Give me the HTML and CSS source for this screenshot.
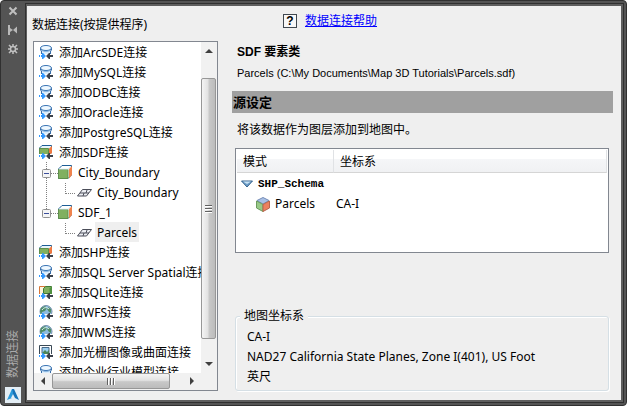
FILE: index.html
```html
<!doctype html>
<html lang="zh-CN">

	<head>
		<meta charset="UTF-8">
		<title>数据连接</title>
		<link rel="stylesheet" href="styles.css">
	</head>

	<body>
		<!-- 图标 -->
		<svg class="sprite" aria-hidden="true">
			<symbol id="arrows" viewBox="0 0 14 14">
				<path d="M0 9h14v5H0z" fill="#fff" />
				<path d="M0 10h1v2H0zM2 10h1V8h1l3 3-3 3H3v-2H2z" fill="#3399ff" />
				<path d="M14 10h-3V8h-1l-3 3 3 3h1v-2h3z" fill="#3c414b" />
			</symbol>
			<symbol id="db" viewBox="0 0 14 14">
				<path d="M1 3l1 5-1 2h12l-1-2 1-5z" fill="#dcedfb" />
				<path d="M1.500 3v2l1 1v3M12.500 3v2l-1 1v3" fill="none" stroke="#3a6ea8" />
				<path d="M3 5.500c2 1.500 6 1.500 8 0" fill="none" stroke="#8db8e0" />
				<ellipse cx="7" cy="3" rx="5.500" ry="2.500" fill="#eef8ff" stroke="#3a74b4" />
				<use href="#arrows" />
			</symbol>
			<symbol id="cube" viewBox="0 0 14 14">
				<path d="M.5 4L4 .5h9.500V10L10 13.500H.5z" fill="#fff" stroke="#1d5d96" />
				<path d="M11 4L14 1v9l-3 3.500z" fill="#f0834d" />
				<path d="M.5 4.500h9.500v9H.5z" fill="#81b060" stroke="#5f8f4c" />
				<path d="M1 4h9l3-3" fill="none" stroke="#dff0f5" />
			</symbol>
			<symbol id="sdf" viewBox="0 0 14 14">
				<path d="M.5 3L3 .5h9.500V8L10 10H.5z" fill="#e8f5fa" stroke="#1d5d96" />
				<path d="M10 3.500l3-2.500v7l-3 2z" fill="#ef7840" />
				<path d="M.5 3.500h9v6h-9z" fill="#81b060" stroke="#5f8f4c" />
				<use href="#arrows" />
			</symbol>
			<symbol id="sqlite" viewBox="0 0 14 14">
				<path d="M.5 1.500h6v9h-6z" fill="#fff6df" stroke="#d77738" />
				<path d="M4.500 3.500l2-2h6v7h-8z" fill="#81b060" stroke="#3f7c35" />
				<path d="M10.500 3l2.500-1v7h-2.500z" fill="#4f913f" />
				<use href="#arrows" />
			</symbol>
			<symbol id="globe" viewBox="0 0 14 14">
				<circle cx="7" cy="6.500" r="6" fill="#8dbce0" stroke="#7590aa" />
				<path d="M2 3l4-2 2 2-2 3-3 1-1 3-1-4zM9 2l3 2v4l-2-1-2-3z" fill="#508d67" />
				<path d="M3 5c2-3 5-3 7-1" fill="none" stroke="#e2f4ff" />
				<use href="#arrows" />
			</symbol>
			<symbol id="raster" viewBox="0 0 14 14">
				<path d="M.5.5h12v10H.5z" fill="#fff" stroke="#3b4a57" />
				<path d="M3 2.500h7v6H3z" fill="#9ccff0" stroke="#476989" />
				<path d="M3 8l3-3 2 2 2-2v4H3z" fill="#4c865a" />
				<use href="#arrows" />
			</symbol>
			<symbol id="plane" viewBox="0 0 14 14" overflow="visible">
				<path d="M.5 11L5.500 4.500h9L9.500 11z" fill="#eef0f5" stroke="#4a4d58" />
				<path d="M3 8h9M6 11l1-3M9 8l1-3" stroke="#4a4d58" />
			</symbol>
			<symbol id="minus" viewBox="0 0 9 9">
				<rect x=".5" y=".5" width="8" height="8" rx="1" fill="#f5f5f5" stroke="#919191" />
				<path d="M2 4.500h5" stroke="#3b4e9b" />
			</symbol>
			<symbol id="schema" viewBox="0 0 14 15">
				<path d="M7 .5l6 3-6 3.500-6-3.500z" fill="#a9c0e6" stroke="#738bb5" />
				<path d="M.5 4L7 7.500v7L.5 11z" fill="#98c987" stroke="#6c9a5e" />
				<path d="M13.500 4L7 7.500v7l6.500-3.500z" fill="#ed805f" stroke="#b8664e" />
			</symbol>
		</svg>

		<div class="palette">
			<div class="titlebar">
				<button type="button" class="tool" aria-label="关闭">
					<svg width="10" height="10"><path d="M1.500 1.500l7 7M8.500 1.500l-7 7" stroke="#c0c0c0" stroke-width="2" /></svg>
				</button>
				<button type="button" class="tool" aria-label="自动隐藏">
					<svg width="10" height="10"><path d="M1 0v10" stroke="#b8b8b8" stroke-width="2" /><path d="M2 3v4l3-2zM9 1.500v7L5 5z" fill="#b8b8b8" /></svg>
				</button>
				<button type="button" class="tool" aria-label="特性">
					<svg width="10" height="10"><circle cx="5" cy="5" r="2.500" fill="none" stroke="#c0c0c0" stroke-width="1.500" /><path d="M5 0v2.500M5 7.500V10M0 5h2.500M7.500 5H10M1 1l2 2M7 7l2 2M9 1L7 3M3 7L1 9" stroke="#c0c0c0" stroke-width="1.500" /></svg>
				</button>
				<span class="caption">数据连接</span>
				<svg class="logo" width="16" height="16">
					<rect width="16" height="16" fill="#e4eef5" />
					<path d="M7 2h2l5 11-4-2H6z" fill="#1673b8" />
					<path d="M7 2L2 13l5-2 1-5z" fill="#2b9bdc" />
					<path d="M8 7l2 4H6z" fill="#e4eef5" />
				</svg>
			</div>

			<div class="content">
				<div class="providers">
					<h2 class="label">数据连接(按提供程序)</h2>
					<div class="tree-box">
						<ul class="tree">
							<li class="node"><svg class="icon"><use href="#db" /></svg><span>添加ArcSDE连接</span></li>
							<li class="node"><svg class="icon"><use href="#db" /></svg><span>添加MySQL连接</span></li>
							<li class="node"><svg class="icon"><use href="#db" /></svg><span>添加ODBC连接</span></li>
							<li class="node"><svg class="icon"><use href="#db" /></svg><span>添加Oracle连接</span></li>
							<li class="node"><svg class="icon"><use href="#db" /></svg><span>添加PostgreSQL连接</span></li>
							<li class="node"><svg class="icon"><use href="#sdf" /></svg><span>添加SDF连接</span></li>
							<li class="node child">
								<svg class="guide"><path d="M12.500 0v20M17 11.500h7" /><use href="#minus" x="8" y="7" width="9" height="9" /></svg>
								<svg class="icon"><use href="#cube" /></svg><span>City_Boundary</span>
							</li>
							<li class="node child">
								<svg class="guide"><path d="M12.500 0v20" /></svg>
								<svg class="guide leaf"><path d="M7.500 1v11M8 11.500h10" /></svg>
								<svg class="icon"><use href="#plane" /></svg><span>City_Boundary</span>
							</li>
							<li class="node child">
								<svg class="guide"><path d="M12.500 0v11M17 11.500h7" /><use href="#minus" x="8" y="7" width="9" height="9" /></svg>
								<svg class="icon"><use href="#cube" /></svg><span>SDF_1</span>
							</li>
							<li class="node child">
								<svg class="guide"></svg>
								<svg class="guide leaf"><path d="M7.500 1v11M8 11.500h10" /></svg>
								<svg class="icon"><use href="#plane" /></svg><span class="selected">Parcels</span>
							</li>
							<li class="node"><svg class="icon"><use href="#sdf" /></svg><span>添加SHP连接</span></li>
							<li class="node"><svg class="icon"><use href="#db" /></svg><span>添加SQL Server Spatial连接</span></li>
							<li class="node"><svg class="icon"><use href="#sqlite" /></svg><span>添加SQLite连接</span></li>
							<li class="node"><svg class="icon"><use href="#globe" /></svg><span>添加WFS连接</span></li>
							<li class="node"><svg class="icon"><use href="#globe" /></svg><span>添加WMS连接</span></li>
							<li class="node"><svg class="icon"><use href="#raster" /></svg><span>添加光栅图像或曲面连接</span></li>
							<li class="node"><svg class="icon"><use href="#db" /></svg><span>添加企业行业模型连接</span></li>
						</ul>
						<div class="scroll vertical">
							<button type="button" class="arrow" aria-label="向上"><svg width="8" height="8"><path d="M4 2l4 4H0z" /></svg></button>
							<div class="track"><div class="thumb"><i></i><i></i><i></i></div></div>
							<button type="button" class="arrow" aria-label="向下"><svg width="8" height="8"><path d="M0 2h8L4 6z" /></svg></button>
						</div>
						<div class="scroll horizontal">
							<button type="button" class="arrow" aria-label="向左"><svg width="8" height="8"><path d="M6 0v8L2 4z" /></svg></button>
							<div class="track"><div class="thumb"><i></i><i></i><i></i></div></div>
							<button type="button" class="arrow" aria-label="向右"><svg width="8" height="8"><path d="M2 0l4 4-4 4z" /></svg></button>
						</div>
						<div class="corner"></div>
					</div>
				</div>

				<div class="details">
					<div class="help">
						<span class="help-icon">?</span>
						<a href="#">数据连接帮助</a>
					</div>
					<h1 class="heading">SDF 要素类</h1>
					<p class="path">Parcels (C:\My Documents\Map 3D Tutorials\Parcels.sdf)</p>
					<h2 class="bar">源设定</h2>
					<p class="note">将该数据作为图层添加到地图中。</p>
					<div class="table-box">
						<table class="schemas">
							<thead>
								<tr><th class="mode">模式</th><th>坐标系</th></tr>
							</thead>
							<tbody>
								<tr class="group">
									<td colspan="2">
										<svg width="12" height="8"><path d="M.5 1h11L6 7z" fill="#6c9cc7" stroke="#38658f" /><path d="M2 1.500h8L6 4z" fill="#c7e2f5" /></svg>SHP_Schema
									</td>
								</tr>
								<tr class="item">
									<td><svg width="14" height="15"><use href="#schema" /></svg>Parcels</td>
									<td>CA-I</td>
								</tr>
							</tbody>
						</table>
					</div>
					<fieldset class="coords">
						<legend>地图坐标系</legend>
						<p>CA-I</p>
						<p>NAD27 California State Planes, Zone I(401), US Foot</p>
						<p>英尺</p>
					</fieldset>
				</div>
			</div>
		</div>
	</body>

</html>
```
FILE: styles.css
```css
* {
	box-sizing: border-box;
}

body,
ul,
h1,
h2,
p {
	margin: 0;
	padding: 0;
}

body {
	font: 12px/20px "Noto Sans", "Noto Sans CJK SC", sans-serif;
	color: #000;
	background: #fff;
}

button {
	padding: 0;
	border: 0;
	background: none;
}

svg {
	flex: none;
	display: block;
}

.sprite {
	position: absolute;
	width: 0;
	height: 0;
}

/* 外框 */
.palette {
	display: flex;
	height: 100vh;
	padding: 2px 2px 2px 0;
	border: 1px solid #303030;
	border-radius: 4px;
	background: #545454;
}

.titlebar {
	display: flex;
	flex-direction: column;
	align-items: center;
	gap: 9px;
	width: 23px;
	padding-top: 3px;
}

.tool {
	height: 10px;
}

.caption {
	margin-top: auto;
	line-height: 16px;
	color: #aaa;
	writing-mode: vertical-rl;
	text-orientation: sideways;
	transform: rotate(180deg);
}

.content {
	flex: 1;
	display: flex;
	gap: 14px;
	min-width: 0;
	margin: 1px 1px 1px 2px;
	padding: 0 8px 9px 6px;
	border: 2px solid #5e5e5e;
	border-left-width: 1px;
	outline: 1px solid #303030;
	background: #efefef;
}

/* 左侧连接树 */
.providers {
	display: flex;
	flex-direction: column;
	width: 185px;
	padding-top: 9px;
}

.label {
	margin-left: -1px;
	font-size: 12px;
	font-weight: normal;
	line-height: 20px;
}

.tree-box {
	flex: 1;
	display: grid;
	grid-template: minmax(0, 1fr) 17px / minmax(0, 1fr) 16px;
	min-height: 0;
	margin-top: 6px;
	border: 1px solid #828790;
	background: #fff;
}

.tree {
	overflow: hidden;
	list-style: none;
}

.node {
	display: flex;
	align-items: center;
	height: 20px;
	padding-left: 5px;
	white-space: nowrap;
}

.child {
	padding-left: 0;
}

.node span {
	margin-left: 4px;
	padding: 2px 2px 0;
	line-height: 18px;
}

.node .selected {
	background: #efefef;
}

.icon {
	width: 14px;
	height: 14px;
	overflow: visible;
}

.guide {
	width: 24px;
	height: 20px;
	fill: none;
	stroke: #808080;
	stroke-dasharray: 1 1;
}

.guide use {
	stroke-dasharray: none;
}

.leaf {
	width: 19px;
}

/* 滚动条 */
.scroll,
.corner {
	display: flex;
	background: #f1f1f1;
}

.vertical {
	flex-direction: column;
}

.arrow {
	flex: none;
	display: flex;
	align-items: center;
	justify-content: center;
	width: 18px;
	height: 16px;
	fill: #404040;
}

.vertical .arrow {
	width: 16px;
	height: 18px;
}

.track {
	flex: 1;
	display: flex;
	min-height: 0;
}

.thumb {
	display: flex;
	align-items: center;
	justify-content: center;
	gap: 1px;
	border: 1px solid #979797;
	border-radius: 2px;
}

.vertical .track {
	padding: 18px 0 16px;
}

.vertical .thumb {
	flex-direction: column;
	width: 15px;
	background: linear-gradient(90deg, #f4f4f4, #e2e2e2 45%, #c8c8c8 55%, #bcbcbc);
}

.horizontal .thumb {
	width: 90%;
	height: 16px;
	background: linear-gradient(#f4f4f4, #e2e2e2 45%, #c8c8c8 55%, #bcbcbc);
}

.thumb i {
	width: 2px;
	height: 7px;
	border-left: 1px solid #606060;
	background: #fff;
}

.vertical .thumb i {
	width: 7px;
	height: 2px;
	border-left: 0;
	border-top: 1px solid #606060;
}

/* 右侧详细信息 */
.details {
	flex: 1;
	display: flex;
	flex-direction: column;
	min-width: 0;
	padding-top: 4px;
}

.help {
	display: flex;
	align-items: center;
	gap: 8px;
	padding-left: 51px;
}

.help-icon {
	width: 14px;
	height: 14px;
	border: 1px solid #404850;
	background: #f8f8f8;
	font: bold 12px/12px "Liberation Sans", sans-serif;
	text-align: center;
}

.help a {
	padding-top: 1px;
	color: #00f;
}

.heading {
	margin: 11px 0 0 5px;
	font: bold 12px/20px "Liberation Sans", "Noto Sans CJK SC", sans-serif;
}

.path {
	padding: 1px 5px 0;
	font: 11px/20px "Liberation Sans", sans-serif;
	white-space: nowrap;
}

.bar {
	margin-top: 8px;
	padding-left: 1px;
	font-size: 13px;
	line-height: 22px;
	background: #a0a0a0;
}

.note {
	padding: 7px 5px 0;
}

.table-box {
	flex: 1;
	margin: 8px 4px 0 3px;
	padding: 1px;
	border: 1px solid #828790;
	background: #fff;
}

.schemas {
	width: 100%;
	border-collapse: separate;
	border-spacing: 0;
	table-layout: fixed;
}

.schemas th {
	height: 23px;
	padding: 2px 6px 0;
	border-right: 1px solid #e0e2e5;
	border-bottom: 1px solid #d5d5d5;
	background: linear-gradient(#fff 40%, #f5f6f8 41%, #f0f1f3);
	font-weight: normal;
	text-align: left;
}

.schemas th.mode {
	width: 97px;
}

.schemas td {
	height: 20px;
	padding: 0 2px;
}

.schemas td svg {
	display: inline-block;
	margin-right: 5px;
	vertical-align: middle;
}

.schemas .group td {
	padding: 1px 4px 0;
	font: bold 11px/20px "Liberation Mono", monospace;
}

.schemas .item td:first-child {
	padding-left: 19px;
}

.coords {
	min-width: 0;
	margin: 53px 4px 0 3px;
	padding: 1px 9px 3px 11px;
	border: 1px solid #d5dfe5;
	border-radius: 3px;
	box-shadow: inset 1px 1px #fff, 1px 1px #fff;
}

.coords legend {
	margin-left: -7px;
	padding: 0 4px;
	line-height: 20px;
	background: #efefef;
}
```
